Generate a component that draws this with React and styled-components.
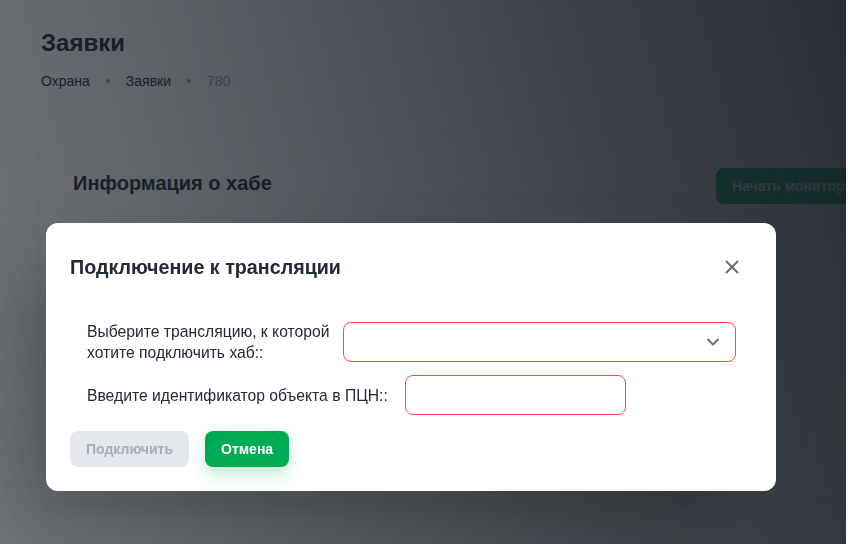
import styled, { createGlobalStyle } from "styled-components";
import { X, ChevronDown } from "lucide-react";

const GlobalStyle = createGlobalStyle`
	* { box-sizing: border-box; }
	body {
		margin: 0;
		font-family: "Liberation Sans", Arial, sans-serif;
		color: #212b36;
		background: #fff;
	}
`;

// страница под модалкой (видна через затемнение)
const Page = styled.div`
	width: calc(100% - 10px);
	height: 544px;
	overflow: hidden;
	padding: 28px 0 0 41px;
	background: #fff;
`;

const PageTitle = styled.h1`
	margin: 0;
	font-size: 24px;
	line-height: 30px;
	font-weight: 700;
	color: #212b36;
`;

const Crumbs = styled.nav`
	display: flex;
	align-items: center;
	gap: 16px;
	margin-top: 12px;
	font-size: 14px;
	line-height: 22px;
`;

const Crumb = styled.span`
	color: ${(p) => (p.$muted ? "#919eab" : "#212b36")};
`;

const Dot = styled.span`
	width: 4px;
	height: 4px;
	border-radius: 50%;
	background: #919eab;
`;

const Card = styled.section`
	margin: 44px 0 0 -1px;
	width: 900px;
	height: 362px;
	border-radius: 16px;
	background: #fff;
	box-shadow: 0 0 2px rgba(145, 158, 171, 0.2), 0 12px 24px -4px rgba(145, 158, 171, 0.12);
`;

const CardHeader = styled.div`
	display: grid;
	grid-template-columns: 643px auto;
	align-items: start;
	padding: 32px 0 0 33px;
	width: 806px;
	height: 197px;
	border-bottom: 1px solid #dfe3e8;
`;

const CardTitle = styled.h2`
	margin: 0;
	font-size: 20px;
	line-height: 30px;
	font-weight: 700;
`;

const GreenButton = styled.button`
	height: 36px;
	padding: 0 16px;
	border: 0;
	border-radius: 8px;
	font: inherit;
	font-size: 14px;
	font-weight: 700;
	color: #fff;
	background: #00ab55;
	white-space: nowrap;
	box-shadow: ${(p) => (p.$glow ? "0 8px 16px 0 rgba(0, 171, 85, 0.24)" : "none")};
`;

const Backdrop = styled.div`
	position: fixed;
	top: 0;
	bottom: 0;
	left: 0;
	right: 10px;
	padding: 223px 0 0 46px;
	background: linear-gradient(75deg, rgba(22, 28, 36, 0.6) 0%, rgba(22, 28, 36, 0.92) 100%);
`;

const Dialog = styled.div`
	width: 730px;
	height: 268px;
	border-radius: 12px;
	background: #fff;
	padding: 24px;
	box-shadow: -40px 40px 80px -8px rgba(0, 0, 0, 0.24);
`;

const DialogHeader = styled.div`
	display: flex;
	align-items: center;
	justify-content: space-between;
	height: 40px;
`;

const DialogTitle = styled.h2`
	margin: 0;
	font-size: 19.7px;
	line-height: 28px;
	font-weight: 700;
	color: #212b36;
`;

const CloseButton = styled.button`
	display: flex;
	align-items: center;
	justify-content: center;
	width: 40px;
	height: 40px;
	padding: 0;
	border: 0;
	background: none;
	color: #637381;
`;

const Form = styled.div`
	display: flex;
	flex-direction: column;
	gap: 12px;
	margin-top: 34px;
	padding-left: 17px;
`;

const Row = styled.div`
	display: flex;
	align-items: center;
	gap: ${(p) => p.$gap || 16}px;
`;

const Label = styled.label`
	width: ${(p) => (p.$width ? `${p.$width}px` : "auto")};
	font-size: 15.7px;
	line-height: 21px;
	color: #212b36;
`;

const Field = styled.div`
	display: flex;
	align-items: center;
	justify-content: flex-end;
	width: ${(p) => p.$width}px;
	height: 40px;
	padding: 0 12px;
	border: 1px solid #ff4842;
	border-radius: 8px;
	color: #637381;
`;

const Actions = styled.div`
	display: flex;
	gap: 16px;
	margin-top: 16px;
`;

const DisabledButton = styled(GreenButton)`
	color: #a6afb9;
	background: #e4e7eb;
`;

export default function App() {
	return (
		<>
			<GlobalStyle />
			<Page>
				<PageTitle>Заявки</PageTitle>
				<Crumbs>
					<Crumb>Охрана</Crumb>
					<Dot />
					<Crumb>Заявки</Crumb>
					<Dot />
					<Crumb $muted>780</Crumb>
				</Crumbs>
				<Card>
					<CardHeader>
						<CardTitle>Информация о хабе</CardTitle>
						<GreenButton>Начать мониторинг</GreenButton>
					</CardHeader>
				</Card>
			</Page>
			<Backdrop>
				<Dialog>
					<DialogHeader>
						<DialogTitle>Подключение к трансляции</DialogTitle>
						<CloseButton>
							<X size={22} strokeWidth={2.2} />
						</CloseButton>
					</DialogHeader>
					<Form>
						<Row $gap={10}>
							<Label $width={246}>Выберите трансляцию, к которой хотите подключить хаб::</Label>
							<Field $width={393}>
								<ChevronDown size={20} strokeWidth={2.4} />
							</Field>
						</Row>
						<Row $gap={17}>
							<Label>Введите идентификатор объекта в ПЦН::</Label>
							<Field $width={221} />
						</Row>
					</Form>
					<Actions>
						<DisabledButton>Подключить</DisabledButton>
						<GreenButton $glow>Отмена</GreenButton>
					</Actions>
				</Dialog>
			</Backdrop>
		</>
	);
}
